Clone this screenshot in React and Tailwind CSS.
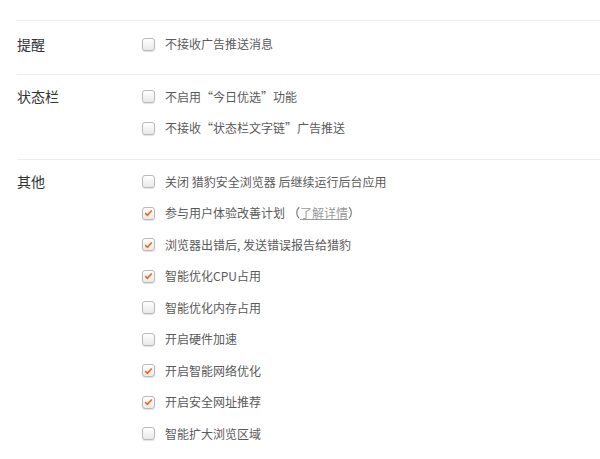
import React from "react"

const sections = [
  {
    label: "提醒",
    pad: "pt-[7.5px] pb-[14px]",
    items: [{ text: "不接收广告推送消息", checked: false }],
  },
  {
    label: "状态栏",
    pad: "pt-[6px] pb-[15px]",
    items: [
      { text: "不启用“今日优选”功能", checked: false },
      { text: "不接收“状态栏文字链”广告推送", checked: false },
    ],
  },
  {
    label: "其他",
    pad: "pt-[6px] pb-[15px]",
    items: [
      { text: "关闭 猎豹安全浏览器 后继续运行后台应用", checked: false },
      { text: "参与用户体验改善计划", checked: true, link: true },
      { text: "浏览器出错后, 发送错误报告给猎豹", checked: true },
      { text: "智能优化CPU占用", checked: true },
      { text: "智能优化内存占用", checked: false },
      { text: "开启硬件加速", checked: false },
      { text: "开启智能网络优化", checked: true },
      { text: "开启安全网址推荐", checked: true },
      { text: "智能扩大浏览区域", checked: false },
    ],
  },
]

function Checkbox({ checked }) {
  return (
    <span className="flex h-[13px] w-[13px] shrink-0 items-center justify-center rounded-[3px] border border-[#b9b9b9] bg-gradient-to-b from-white to-[#e9e9e9] shadow-[0_1px_1px_rgba(0,0,0,0.12)]">
      {checked && (
        <svg width="9" height="8" viewBox="0 0 9 8">
          <polyline points="1.2,4.2 3.4,6.3 7.8,1.5" fill="none" stroke="#f0641e" strokeWidth="1.6" />
        </svg>
      )}
    </span>
  )
}

export default function App() {
  return (
    <div
      className="min-h-screen bg-white pl-[17px] pt-[20px]"
      style={{ fontFamily: '"Noto Sans CJK SC", "Noto Sans", sans-serif' }}
    >
      {sections.map((s, i) => (
        <div key={i} className={`flex border-t border-[#ececec] ${s.pad}`}>
          <div className="flex h-[31.5px] w-[125px] shrink-0 items-center text-[14px] text-[#333]">
            {s.label}
          </div>
          <div className="flex flex-col">
            {s.items.map((it, j) => (
              <div key={j} className="flex h-[31.5px] items-center text-[12px] text-[#5a5a5a]">
                <Checkbox checked={it.checked} />
                <span className="ml-[10px]">
                  {it.text}
                  {it.link && (
                    <span className="ml-[3px]">
                      （<span className="text-[#999] underline">了解详情</span>）
                    </span>
                  )}
                </span>
              </div>
            ))}
          </div>
        </div>
      ))}
    </div>
  )
}
